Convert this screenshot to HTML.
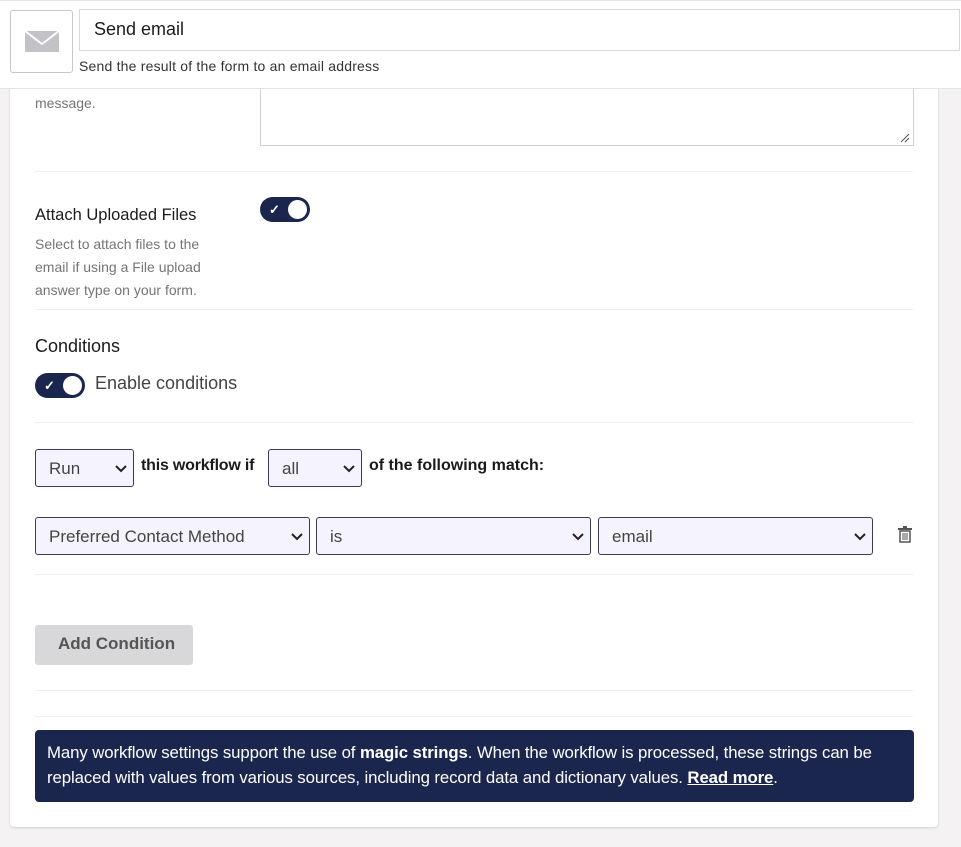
<!DOCTYPE html>
<html><head><style>
*{box-sizing:border-box;margin:0;padding:0}
body{width:961px;height:847px;background:#f4f2f3;font-family:"Liberation Sans",sans-serif;position:relative;overflow:hidden;color:#1b1b1b}
.a{position:absolute}
.card{left:10px;top:80px;width:928px;height:747px;background:#fff;border-radius:0 0 4px 4px;box-shadow:0 1px 2px rgba(0,0,0,.15)}
.hdr{left:0;top:0;width:961px;height:89px;background:#fff;border-top:1px solid #e4e4e4;border-bottom:1px solid #e4e4e4}
.hr{height:1px;background:#eeeeee;left:35px;width:878px}
.lbl{font-size:16.5px;color:#1b1b1b}
.desc{font-size:14px;color:#757575;line-height:23px}
.sel{background:#f5f3fd;border:1px solid #3a3a5c;border-radius:3px;height:38px;font-size:17px;color:#444;padding:9px 0 0 13px}
.sel svg{position:absolute;right:6px;top:15px}
.tog{width:50px;height:25px;background:#1b264f;border-radius:13px}
.tog i{position:absolute;right:3px;top:3px;width:19px;height:19px;border-radius:50%;background:#fff}
.tog b{position:absolute;left:9px;top:5px;color:#fff;font-size:13px}
</style></head><body>
<div class="a card"></div>
<div class="a hdr"></div>
<div class="a" style="left:10px;top:10px;width:63px;height:63px;border:1px solid #c8c8c8;border-radius:3px;background:#fff"></div>
<svg class="a" style="left:25px;top:31px" width="34" height="21"><rect width="34" height="21" fill="#c3c3c7"/><path d="M0 0 L17 13 L34 0" stroke="#fff" stroke-width="2" fill="none"/></svg>
<div class="a" style="left:79px;top:9px;width:881px;height:42px;border:1px solid #d8d8d8;font-size:18px;padding:9px 0 0 14px">Send email</div>
<div class="a" style="left:79px;top:58px;font-size:14px;color:#333;letter-spacing:0.2px">Send the result of the form to an email address</div>
<div class="a desc" style="left:35px;top:92px">message.</div>
<div class="a" style="left:260px;top:89px;width:654px;height:57px;border:1px solid #d0d0d0;border-top:none"></div>
<svg class="a" style="left:899px;top:133px" width="12" height="10"><path d="M2 9 L10 1 M6 9 L10 5" stroke="#555" stroke-width="1"/></svg>
<div class="a hr" style="top:171px"></div>
<div class="a lbl" style="left:35px;top:206px">Attach Uploaded Files</div>
<div class="a desc" style="left:35px;top:233px;width:190px">Select to attach files to the email if using a File upload answer type on your form.</div>
<div class="a tog" style="left:260px;top:197px"><b>✓</b><i></i></div>
<div class="a hr" style="top:309px"></div>
<div class="a" style="left:35px;top:336px;font-size:18px">Conditions</div>
<div class="a tog" style="left:35px;top:373px"><b>✓</b><i></i></div>
<div class="a" style="left:95px;top:373px;font-size:18px;color:#444">Enable conditions</div>
<div class="a hr" style="top:422px"></div>
<div class="a sel" style="left:35px;top:449px;width:99px">Run<svg width="12" height="8"><path d="M1 1 L6 6 L11 1" stroke="#222" stroke-width="2" fill="none"/></svg></div>
<div class="a" style="left:141px;top:457px;font-size:16px;font-weight:bold;letter-spacing:-0.2px">this workflow if</div>
<div class="a sel" style="left:268px;top:449px;width:94px">all<svg width="12" height="8"><path d="M1 1 L6 6 L11 1" stroke="#222" stroke-width="2" fill="none"/></svg></div>
<div class="a" style="left:369px;top:457px;font-size:16px;font-weight:bold">of the following match:</div>
<div class="a sel" style="left:35px;top:517px;width:275px">Preferred Contact Method<svg width="12" height="8"><path d="M1 1 L6 6 L11 1" stroke="#222" stroke-width="2" fill="none"/></svg></div>
<div class="a sel" style="left:316px;top:517px;width:275px">is<svg width="12" height="8"><path d="M1 1 L6 6 L11 1" stroke="#222" stroke-width="2" fill="none"/></svg></div>
<div class="a sel" style="left:598px;top:517px;width:275px">email<svg width="12" height="8"><path d="M1 1 L6 6 L11 1" stroke="#222" stroke-width="2" fill="none"/></svg></div>
<svg class="a" style="left:898px;top:526px" width="14" height="17"><rect x="0" y="2" width="14" height="2" fill="#555"/><rect x="5" y="0" width="4" height="2" fill="#555"/><path d="M2 5 H12 V16 H2 Z" fill="none" stroke="#555" stroke-width="1.5"/><path d="M5 7 V14 M7 7 V14 M9 7 V14" stroke="#555"/></svg>
<div class="a hr" style="top:574px"></div>
<div class="a" style="left:35px;top:625px;width:158px;height:40px;background:#d8d8da;border-radius:3px;font-size:17px;font-weight:bold;color:#555;padding:9px 0 0 23px">Add Condition</div>
<div class="a hr" style="top:690px"></div>
<div class="a hr" style="top:716px"></div>
<div class="a" style="left:35px;top:730px;width:879px;height:72px;background:#1b264f;border-radius:4px;color:#fff;font-size:16.8px;line-height:25px;padding:10px 12px;letter-spacing:-0.1px">Many workflow settings support the use of <b>magic strings</b>. When the workflow is processed, these strings can be replaced with values from various sources, including record data and dictionary values. <b><u>Read more</u></b>.</div>
</body></html>
